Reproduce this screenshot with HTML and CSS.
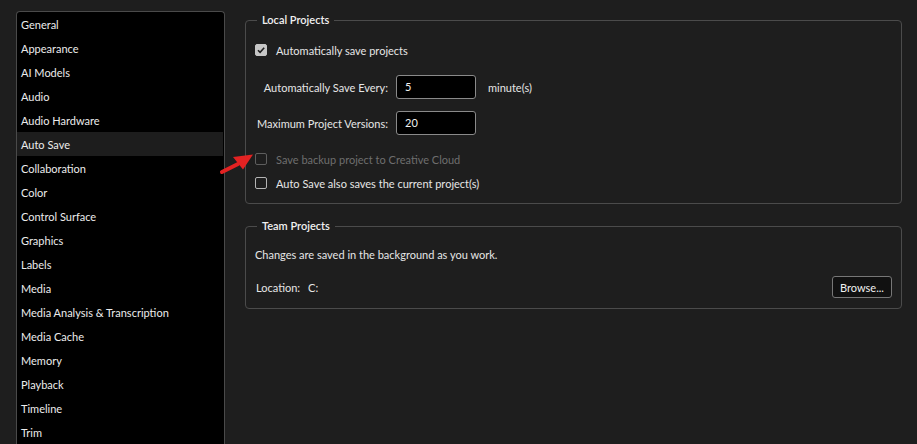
FILE: index.html
```html
<!DOCTYPE html>
<html>
<head>
<meta charset="utf-8">
<link rel="stylesheet" href="styles.css">
</head>
<body>
<div class="window">
  <ul class="nav">
    <li>General</li>
    <li>Appearance</li>
    <li>AI Models</li>
    <li>Audio</li>
    <li>Audio Hardware</li>
    <li class="active">Auto Save</li>
    <li>Collaboration</li>
    <li>Color</li>
    <li>Control Surface</li>
    <li>Graphics</li>
    <li>Labels</li>
    <li>Media</li>
    <li>Media Analysis &amp; Transcription</li>
    <li>Media Cache</li>
    <li>Memory</li>
    <li>Playback</li>
    <li>Timeline</li>
    <li>Trim</li>
  </ul>
  <div class="main">
    <fieldset class="group local">
      <legend>Local Projects</legend>
      <div class="check-row first">
        <span class="box checked"><svg viewBox="0 0 12 12" width="12" height="12"><path d="M3 6.2 L5.1 8.3 L9.2 3.8" fill="none" stroke="#1e1e1e" stroke-width="1.6"/></svg></span>
        <span>Automatically save projects</span>
      </div>
      <div class="field-grid">
        <span class="field-label">Automatically Save Every:</span>
        <span class="input">5</span>
        <span class="unit">minute(s)</span>
        <span class="field-label">Maximum Project Versions:</span>
        <span class="input">20</span>
        <span></span>
      </div>
      <div class="check-row disabled backup">
        <span class="box"></span>
        <span>Save backup project to Creative Cloud</span>
        <svg class="arrow" viewBox="0 0 36 24" width="36" height="24"><path d="M3 20 L19 12" stroke="#e32222" stroke-width="4" stroke-linecap="round"/><path d="M34 2.5 L14 5 L24 17.5 Z" fill="#e32222"/></svg>
      </div>
      <div class="check-row">
        <span class="box"></span>
        <span>Auto Save also saves the current project(s)</span>
      </div>
    </fieldset>
    <fieldset class="group team">
      <legend>Team Projects</legend>
      <p class="desc">Changes are saved in the background as you work.</p>
      <div class="loc-row">
        <span class="loc-label">Location:</span>
        <span class="loc-val">C:</span>
        <button class="btn">Browse...</button>
      </div>
    </fieldset>
  </div>
</div>
</body>
</html>
```

FILE: styles.css
```css
* { box-sizing: border-box; }
html, body { margin: 0; padding: 0; }
body {
  background: #1e1e1e;
  color: #e6e6e6;
  font-family: Lato, "Open Sans", sans-serif;
  font-size: 11px;
  width: 917px;
  height: 444px;
  overflow: hidden;
}
.window {
  display: flex;
  padding: 11px 0 0 16px;
  gap: 20px;
}
.nav {
  list-style: none;
  margin: 0;
  padding: 0;
  width: 209px;
  height: 433px;
  overflow: hidden;
  background: #000;
  border: 1px solid #4a4a4a;
  border-bottom: none;
  border-radius: 4px 4px 0 0;
  flex: none;
}
.nav li {
  height: 24px;
  line-height: 23px;
  padding-top: 1px;
  padding-left: 4px;
  color: #ececec;
  margin-right: 1px;
}
.nav li.active { background: #1d1d1d; }
.main {
  width: 657px;
  display: flex;
  flex-direction: column;
  gap: 14px;
  padding-top: 1px;
}
.group {
  margin: 0;
  border: 1px solid #4b4b4b;
  border-radius: 4px;
  padding: 0 9px 0 9px;
  min-width: 0;
}
.group legend {
  padding: 0 5px;
  margin-left: 2px;
  line-height: 16px;
  color: #f0f0f0;
  font-weight: 600;
}
.local { padding-top: 14px; padding-bottom: 12px; }
.check-row {
  display: flex;
  align-items: center;
  height: 16px;
  gap: 9px;
  position: relative;
}
.check-row.backup { margin-top: 16px; }
.check-row.backup + .check-row { margin-top: 8px; }
.box {
  width: 12px;
  height: 12px;
  border: 1.5px solid #b4b4b4;
  border-radius: 2px;
  background: #1e1e1e;
  flex: none;
  display: flex;
}
.box.checked { background: #c6c6c6; border-color: #c6c6c6; }
.box svg { margin: -1.5px; }
.disabled { color: #6e6e6e; }
.disabled .box { border-color: #5e5e5e; }
.arrow {
  position: absolute;
  left: -36px;
  top: 1px;
}
.field-grid {
  display: grid;
  grid-template-columns: 133px 80px auto;
  column-gap: 8px;
  row-gap: 12px;
  align-items: center;
  margin-top: 17px;
}
.field-label { text-align: right; }
.input {
  height: 24px;
  background: #000;
  border: 1px solid #8a8a8a;
  border-radius: 3px;
  padding-left: 8px;
  line-height: 22px;
  color: #f0f0f0;
}
.unit { margin-left: 4px; }
.team { padding-top: 13px; padding-bottom: 10px; }
.desc { margin: 0; line-height: 16px; }
.loc-row {
  display: flex;
  align-items: center;
  margin-top: 13px;
}
.loc-label { margin-left: 1px; }
.loc-val { margin-left: 8px; }
.btn {
  margin-left: auto;
  height: 22px;
  width: 60px;
  background: #111;
  color: #f0f0f0;
  border: 1px solid #777;
  border-radius: 3px;
  font-family: inherit;
  font-size: 11px;
  padding: 0;
}
```
